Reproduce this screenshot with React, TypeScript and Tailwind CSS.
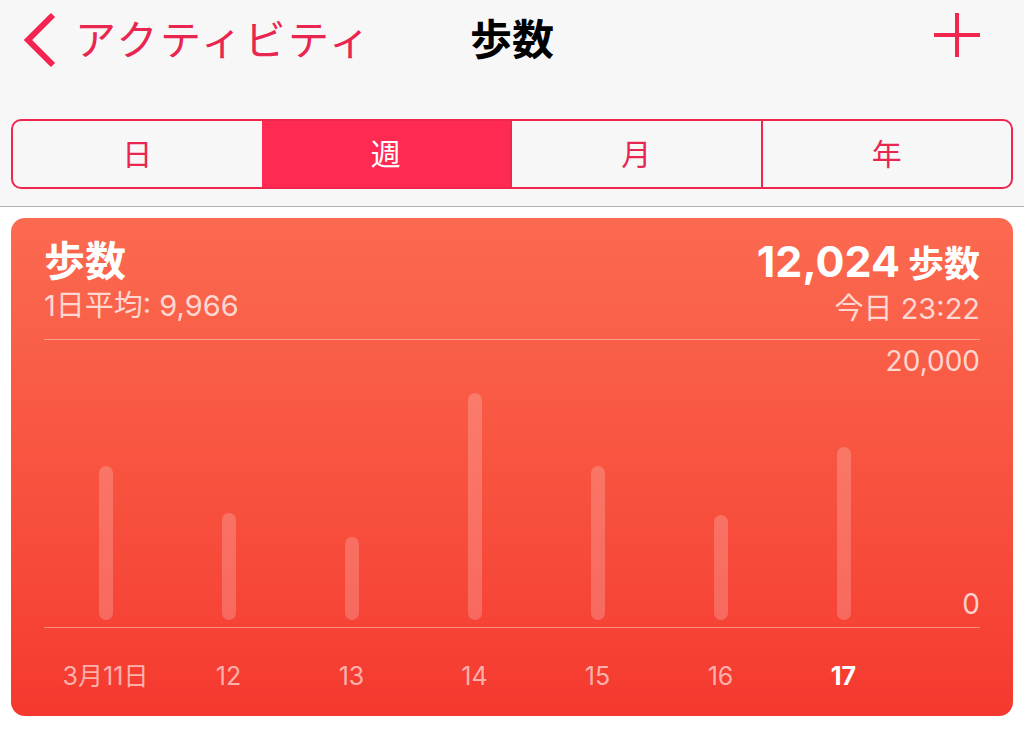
import React from "react";

const bars = [
  { label: "3月11日", h: 154 },
  { label: "12", h: 107 },
  { label: "13", h: 83 },
  { label: "14", h: 227 },
  { label: "15", h: 154 },
  { label: "16", h: 105 },
  { label: "17", h: 173, today: true },
];

const segments = ["日", "週", "月", "年"];

export default function App() {
  return (
    <div className="w-[1024px] h-[735px] bg-white overflow-hidden font-['Inter','Noto_Sans_CJK_JP',sans-serif]">
      {/* header */}
      <div className="bg-[#f7f7f8] border-b border-[#b4b4b8] px-[11px] pb-[17px]">
        <div className="grid grid-cols-[1fr_auto_1fr] items-center h-[80px]">
          <div className="flex items-center">
            <svg width="40" height="60" viewBox="0 0 40 60" className="ml-[12px] -mt-[2px]">
              <polyline
                points="30,6 5,31 30,56"
                fill="none"
                stroke="#f5234f"
                strokeWidth="6"
                strokeLinecap="butt"
                strokeLinejoin="miter"
              />
            </svg>
            <span className="ml-[12px] text-[41px] leading-none text-[#e8264f] tracking-[2.5px]">アクティビティ</span>
          </div>
          <div className="text-[42px] leading-none font-bold text-black">歩数</div>
          <div className="flex justify-end">
            <svg width="48" height="48" viewBox="0 0 48 48" className="mr-[32px] -mt-[10px]">
              <path d="M24 2 V46 M1 24 H47" stroke="#f0264f" strokeWidth="4" fill="none" />
            </svg>
          </div>
        </div>
        <div className="mt-[39px] h-[70px] flex border-2 border-[#f0264f] rounded-[10px] overflow-hidden">
          {segments.map((s, i) => (
            <div
              key={s}
              className={
                "flex-1 flex items-center justify-center text-[30px] leading-none " +
                (i === 1 ? "bg-[#ff2a52] text-white" : "text-[#e8264f]") +
                (i > 1 ? " border-l-2 border-[#f0264f]" : "")
              }
            >
              {s}
            </div>
          ))}
        </div>
      </div>

      {/* card */}
      <div className="mx-[11px] mt-[11px] h-[498px] rounded-[14px] bg-gradient-to-b from-[#fb6a50] to-[#f5382f] px-[33px] pt-[21px] text-white">
        <div className="flex justify-between">
          <div>
            <div className="text-[41px] leading-[44px] font-bold">歩数</div>
            <div className="mt-[6px] text-[29px] leading-[34px] text-white/75">1日平均: 9,966</div>
          </div>
          <div className="flex flex-col items-end">
            <div className="flex items-baseline gap-[8px] leading-[44px]">
              <span className="text-[43px] font-bold">12,024</span>
              <span className="text-[36px] font-bold">歩数</span>
            </div>
            <div className="mt-[6px] text-[29px] leading-[34px] text-white/75">今日 23:22</div>
          </div>
        </div>

        <div className="mt-[13px] h-[289px] border-t border-b border-white/40 flex">
          {bars.map((b) => (
            <div key={b.label} className="w-[123px] shrink-0 flex items-end justify-center pb-[7px]">
              <div className="w-[14px] rounded-full bg-white/20" style={{ height: b.h }} />
            </div>
          ))}
          <div className="flex-1 w-0 min-w-0 flex flex-col justify-between items-end pt-[4px] pb-[6px] text-[28px] leading-[34px] text-white/75">
            <span className="whitespace-nowrap">20,000</span>
            <span>0</span>
          </div>
        </div>

        <div className="flex mt-[32px]">
          {bars.map((b) => (
            <div
              key={b.label}
              className={
                "w-[123px] shrink-0 text-center text-[25px] leading-[32px] whitespace-nowrap " +
                (b.today ? "font-bold text-white" : "text-white/60")
              }
            >
              {b.label}
            </div>
          ))}
        </div>
      </div>
    </div>
  );
}
